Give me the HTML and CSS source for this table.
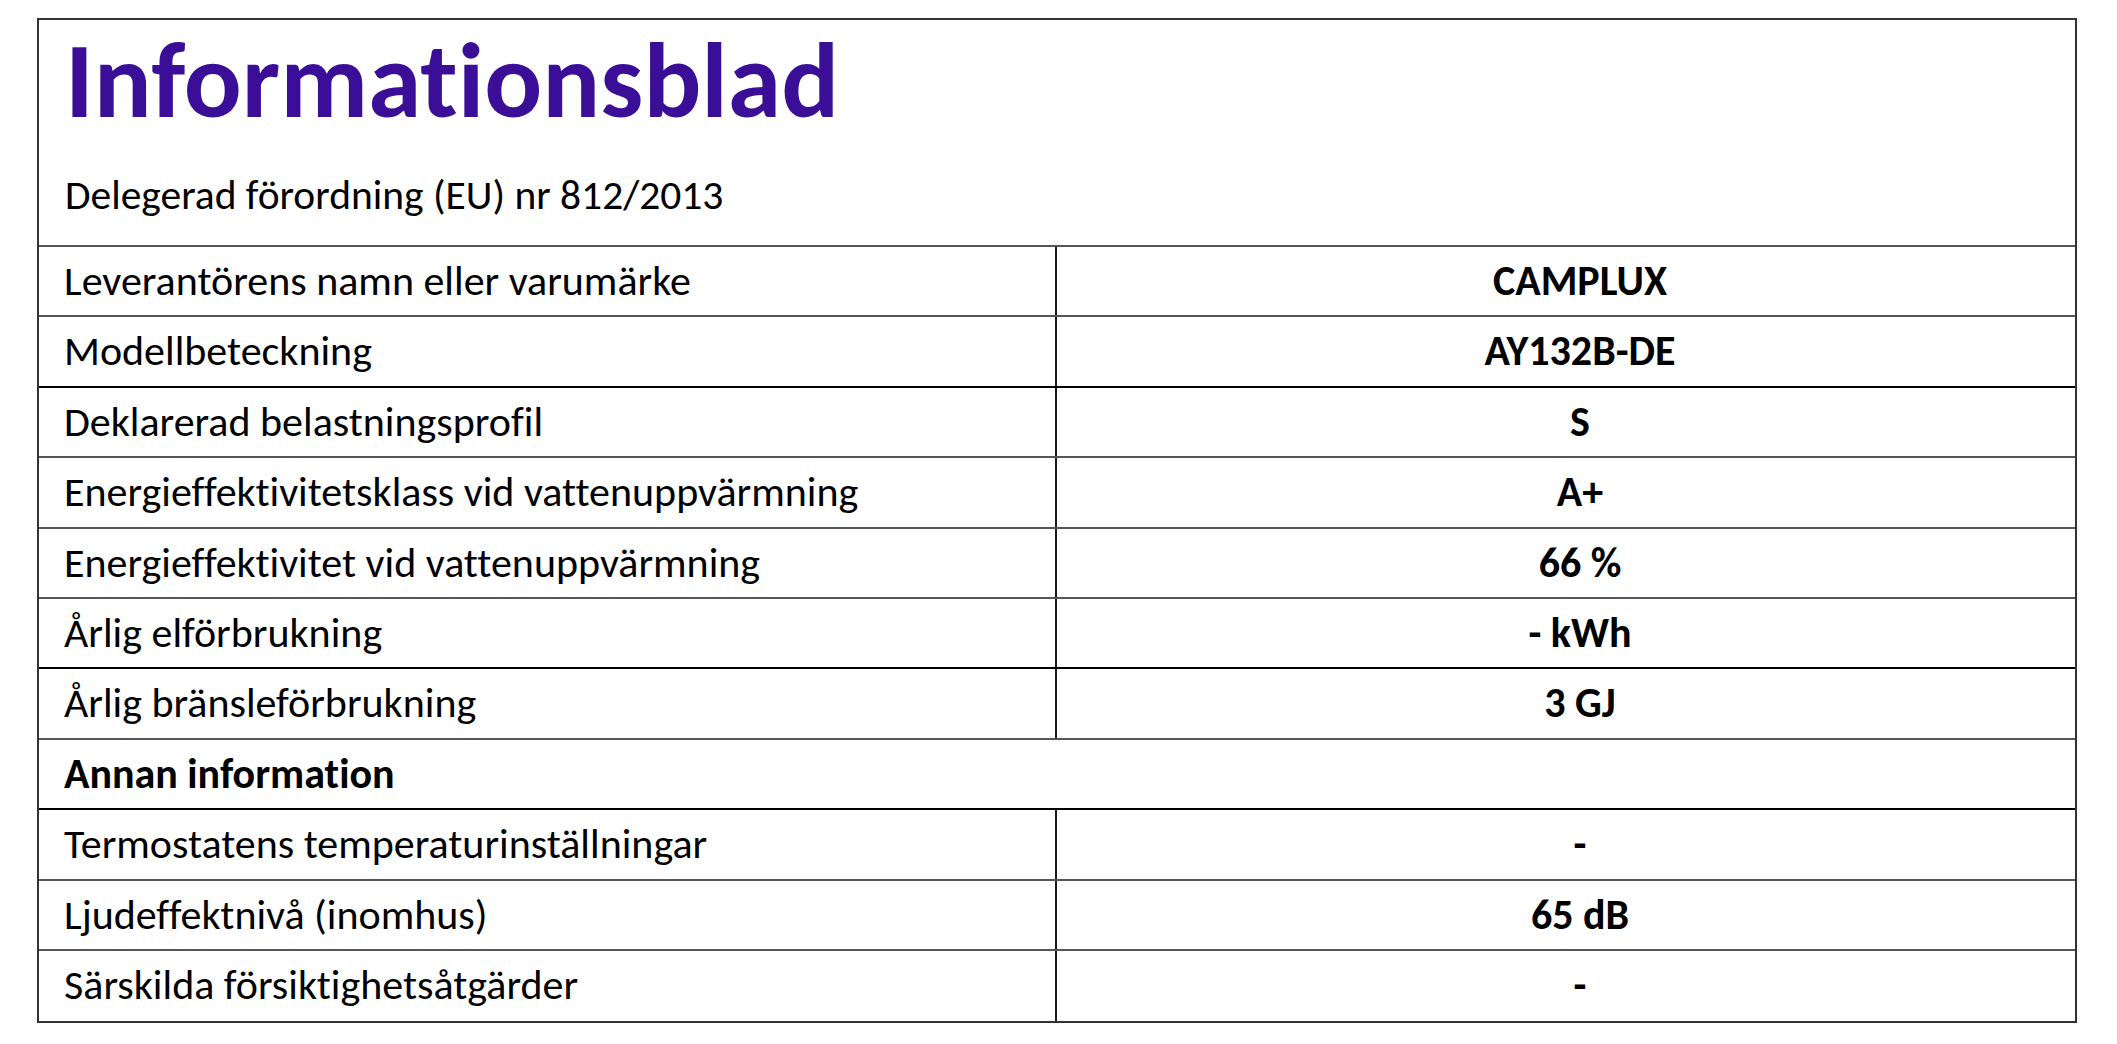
FILE: index.html
```html
<!DOCTYPE html>
<html lang="sv">
<head>
<meta charset="utf-8">
<title>Informationsblad</title>
<link rel="stylesheet" href="styles.css">
</head>
<body>
<div class="sheet">
  <div class="head">
    <h1 class="title">Informationsblad</h1>
    <p class="subtitle">Delegerad förordning (EU) nr 812/2013</p>
  </div>
  <div class="row"><div class="label">Leverantörens namn eller varumärke</div><div class="value">CAMPLUX</div></div>
  <div class="row dark"><div class="label">Modellbeteckning</div><div class="value">AY132B-DE</div></div>
  <div class="row"><div class="label">Deklarerad belastningsprofil</div><div class="value">S</div></div>
  <div class="row"><div class="label">Energieffektivitetsklass vid vattenuppvärmning</div><div class="value">A+</div></div>
  <div class="row"><div class="label">Energieffektivitet vid vattenuppvärmning</div><div class="value">66 %</div></div>
  <div class="row dark"><div class="label">Årlig elförbrukning</div><div class="value">- kWh</div></div>
  <div class="row"><div class="label">Årlig bränsleförbrukning</div><div class="value">3 GJ</div></div>
  <div class="row dark"><div class="label span bold">Annan information</div></div>
  <div class="row"><div class="label">Termostatens temperaturinställningar</div><div class="value">-</div></div>
  <div class="row"><div class="label">Ljudeffektnivå (inomhus)</div><div class="value">65 dB</div></div>
  <div class="row last"><div class="label">Särskilda försiktighetsåtgärder</div><div class="value">-</div></div>
</div>
</body>
</html>
```
FILE: styles.css
```css
html, body {
  margin: 0;
  padding: 0;
  background: #ffffff;
}
body {
  font-family: "Carlito", "Liberation Sans", "Noto Sans", sans-serif;
  font-variant-ligatures: none;
  font-feature-settings: "liga" 0, "clig" 0;
  color: #000;
}
.sheet {
  margin: 18px 0 0 37px;
  width: 2040px;
  border: 2px solid #333;
  box-sizing: border-box;
}
.head {
  height: 227px;
  box-sizing: border-box;
  border-bottom: 2px solid #555;
  padding: 0 0 0 26px;
}
.title {
  margin: 0;
  font-size: 108px;
  line-height: 1.12;
  font-weight: bold;
  color: #3b0e98;
}
.subtitle {
  margin: 31px 0 0 0;
  font-size: 41.5px;
  line-height: 1.1;
  font-weight: normal;
}
.row {
  display: grid;
  grid-template-columns: 1018px 1fr;
  height: 70.4px;
  box-sizing: border-box;
  border-bottom: 2px solid #555;
}
.row.dark {
  border-bottom-color: #000;
}
.row.last {
  border-bottom: none;
}
.label {
  padding-left: 25px;
  padding-top: 1px;
  font-size: 42px;
  line-height: 66px;
  white-space: nowrap;
  border-right: 2px solid #1a1a1a;
}
.label.span {
  grid-column: 1 / 3;
  border-right: none;
}
.bold {
  font-weight: bold;
}
.value {
  padding-left: 28px;
  padding-top: 1px;
  font-size: 42px;
  line-height: 66px;
  font-weight: bold;
  text-align: center;
  white-space: nowrap;
}
```
